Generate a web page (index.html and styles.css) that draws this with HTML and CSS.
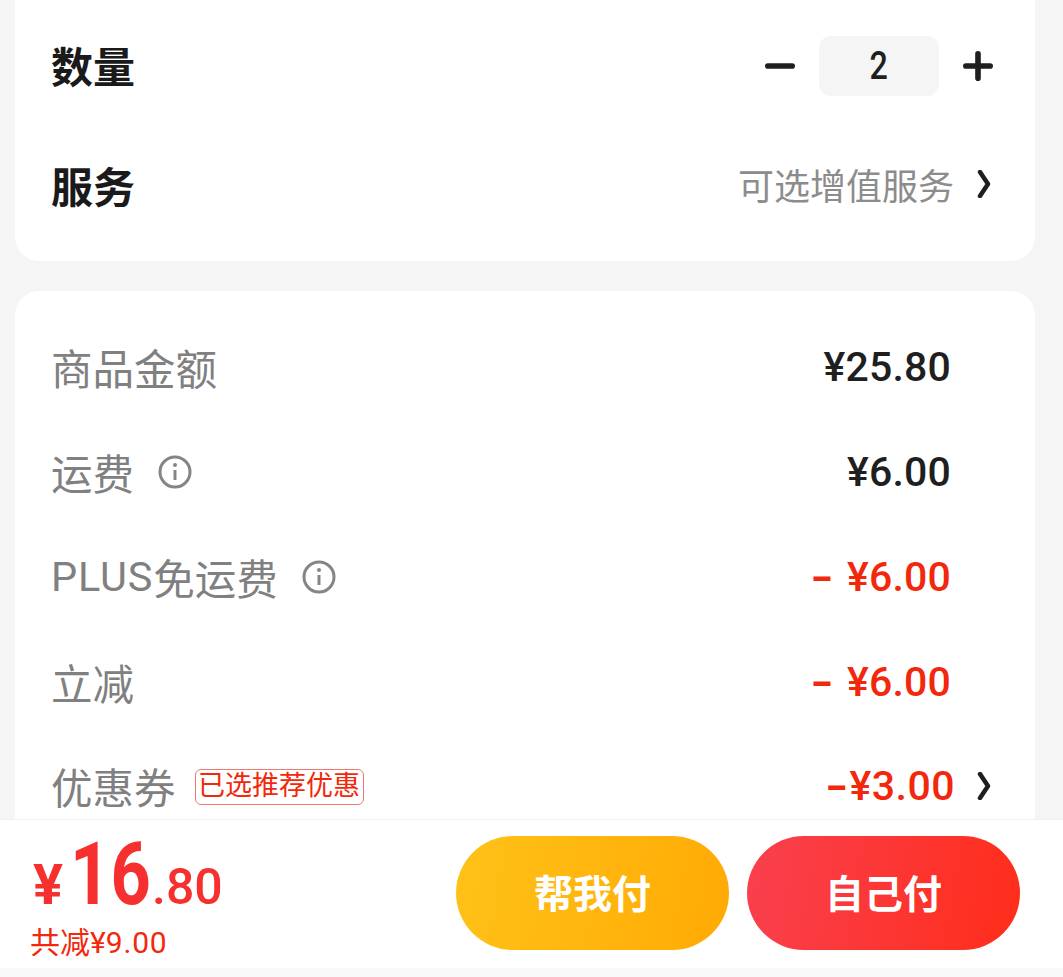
FILE: index.html
```html
<!DOCTYPE html>
<html lang="zh-CN">
<head>
    <meta charset="UTF-8">
    <meta name="viewport" content="width=device-width, initial-scale=1.0">
    <title>确认订单</title>
    <link rel="stylesheet" href="styles.css">
</head>
<body>
    <div class="page">
        <section class="card card-top">
            <div class="row">
                <span class="row-title">数量</span>
                <div class="stepper">
                    <svg class="step-icon" viewBox="0 0 32 32"><path d="M3 16H29"/></svg>
                    <span class="step-value"><span class="step-num">2</span></span>
                    <svg class="step-icon" viewBox="0 0 32 32"><path d="M3 16H29M16 3V29"/></svg>
                </div>
            </div>
            <div class="row">
                <span class="row-title">服务</span>
                <div class="service-right">
                    <span class="service-hint">可选增值服务</span>
                    <svg class="chevron" viewBox="0 0 14 28"><path d="M3 2L11 14L3 26"/></svg>
                </div>
            </div>
        </section>

        <section class="card card-price">
            <div class="price-row">
                <span class="price-label">商品金额</span>
                <span class="price-value">¥25.80</span>
            </div>
            <div class="price-row">
                <span class="price-label">运费
                    <svg class="info" viewBox="0 0 34 34"><circle cx="17" cy="17" r="15"/><path d="M17 15V25"/><circle class="info-dot" cx="17" cy="10" r="2"/></svg>
                </span>
                <span class="price-value">¥6.00</span>
            </div>
            <div class="price-row">
                <span class="price-label"><span class="latin">PLUS</span>免运费
                    <svg class="info" viewBox="0 0 34 34"><circle cx="17" cy="17" r="15"/><path d="M17 15V25"/><circle class="info-dot" cx="17" cy="10" r="2"/></svg>
                </span>
                <span class="price-value red"><span class="minus minus-gap">-</span>¥6.00</span>
            </div>
            <div class="price-row">
                <span class="price-label">立减</span>
                <span class="price-value red"><span class="minus minus-gap">-</span>¥6.00</span>
            </div>
            <div class="price-row price-row-coupon">
                <span class="price-label">优惠券<span class="coupon-tag">已选推荐优惠</span></span>
                <div class="coupon-right">
                    <span class="price-value red coupon-value"><span class="minus">-</span>¥3.00</span>
                    <svg class="chevron" viewBox="0 0 14 28"><path d="M3 2L11 14L3 26"/></svg>
                </div>
            </div>
        </section>
    </div>

    <footer class="paybar">
        <div class="total">
            <div class="total-price"><span class="yen">¥</span><span class="int">16</span><span class="dec">.80</span></div>
            <div class="total-saved">共减¥<span class="saved-num">9.00</span></div>
        </div>
        <div class="pay-buttons">
            <button class="pay-btn pay-friend">帮我付</button>
            <button class="pay-btn pay-self">自己付</button>
        </div>
    </footer>
</body>
</html>
```

FILE: styles.css
```css
* { box-sizing: border-box; }
html, body { margin: 0; height: 100%; }
body { position: relative; height: 977px; overflow: hidden; background: #f5f5f5; color: #1f1f1f; font-family: Roboto, "Noto Sans CJK SC", sans-serif; }

.page { display: flex; flex-direction: column; gap: 30px; padding: 0 28px 0 15px; }
.card { background: #fff; border-radius: 24px; }

.card-top { height: 261px; border-radius: 0 0 24px 24px; padding: 4px 42px 0 36px; }
.row { display: flex; justify-content: space-between; align-items: center; height: 120px; }
.row-title { font-size: 42px; font-weight: 700; color: #1a1a1a; }
.stepper { display: flex; align-items: center; gap: 24px; margin-top: 4px; }
.step-icon { width: 30px; height: 30px; fill: none; stroke: #1f1f1f; stroke-width: 6; stroke-linecap: round; }
.step-value { display: flex; justify-content: center; align-items: center; width: 120px; height: 60px; border-radius: 12px; background: #f5f5f5; }
.step-num { display: inline-block; font-size: 38px; font-weight: 500; transform: scaleX(0.85); }
.service-right { display: flex; align-items: center; gap: 23px; margin-right: 2px; }
.service-hint { font-size: 36px; color: #8c8c8c; }
.chevron { width: 14px; height: 28px; fill: none; stroke: #1f1f1f; stroke-width: 4.5; stroke-linecap: round; stroke-linejoin: round; }

.card-price { height: 640px; padding: 23px 42px 0 37px; }
.price-row { display: flex; justify-content: space-between; align-items: center; height: 105px; padding-right: 42px; }
.price-label { display: flex; align-items: center; font-size: 41.5px; color: #808080; margin-left: -1px; }
.latin { letter-spacing: 0.8px; }
.price-value { font-size: 41px; font-weight: 500; letter-spacing: 0.2px; color: #1f1f1f; }
.price-value.red { color: #f2270c; }
.coupon-value { letter-spacing: 0.5px; }
.minus { display: inline-block; font-weight: 700; transform: scaleX(1.5); margin-right: 4px; }
.minus-gap { margin-right: 17px; }
.info { width: 34px; height: 34px; margin-left: 24px; fill: none; stroke: #858585; stroke-width: 3; }
.info-dot { fill: #858585; stroke: none; }
.price-row-coupon { height: 103px; padding-right: 2px; }
.coupon-tag { margin: 2px 0 0 19px; padding: 0 2.5px; height: 36px; line-height: 33px; font-size: 27px; color: #f2270c; border: 1px solid #f0796c; border-radius: 6px; }
.coupon-right { display: flex; align-items: center; gap: 22px; }

.paybar { position: absolute; left: 0; right: 0; top: 819px; height: 158px; display: flex; justify-content: space-between; background: #fff; border-top: 1px solid #f0f0f0; border-bottom: 9px solid #f9f9f9; padding: 16px 43px 0 33px; }
.total { display: flex; flex-direction: column; margin-top: -6px; }
.total-price { display: flex; align-items: baseline; height: 88px; line-height: 1; color: #f5302f; font-weight: 700; }
.yen { font-size: 56px; margin-right: 7px; }
.int { display: inline-block; font-size: 88px; transform: scaleX(0.8); transform-origin: left; margin-right: -19px; }
.dec { font-size: 50px; font-weight: 500; }
.total-saved { margin-left: -3px; font-size: 30px; color: #f2270c; }
.saved-num { letter-spacing: 0.8px; }
.pay-buttons { display: flex; gap: 18px; }
.pay-btn { width: 273px; height: 114px; border: 0; border-radius: 57px; padding: 0 0 4px; color: #fff; font-family: "Noto Sans CJK SC", sans-serif; font-size: 39px; font-weight: 700; }
.pay-friend { background: linear-gradient(100deg, #ffc218, #ffaa04); }
.pay-self { background: linear-gradient(100deg, #f9404f, #ff2d1a); }
```
